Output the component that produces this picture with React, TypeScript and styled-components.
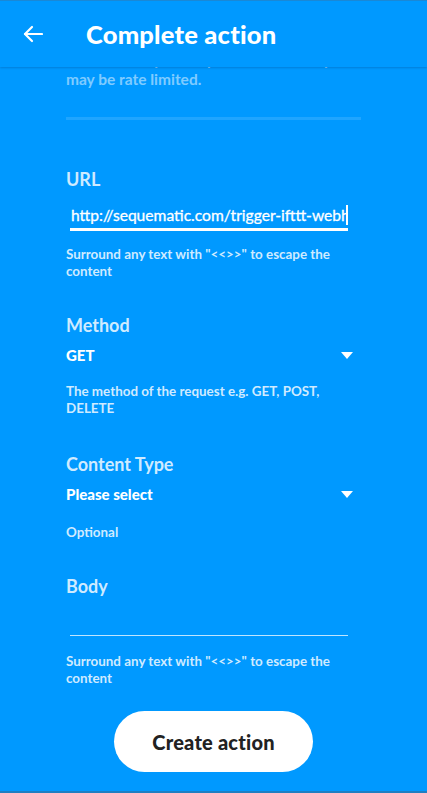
import React from "react";
import styled, { createGlobalStyle } from "styled-components";

const Global = createGlobalStyle`
  html, body { margin: 0; padding: 0; background: #0099ff; }
  body { font-family: "Lato", "Open Sans", sans-serif; -webkit-font-smoothing: antialiased; }
  * { box-sizing: border-box; }
`;

const Screen = styled.div`
  position: relative;
  width: 427px;
  height: 793px;
  overflow: hidden;
  background: #0099ff;
  border-top: 1px solid #1a88d6;
  border-bottom: 2px solid #1f7fc2;
`;

const Header = styled.header`
  position: absolute;
  top: 0;
  left: 0;
  right: 0;
  height: 66px;
  z-index: 2;
  display: flex;
  align-items: center;
  background: #0099ff;
  box-shadow: 0 1px 2px rgba(0, 40, 90, 0.25);
`;

const BackButton = styled.button`
  width: 20px;
  height: 20px;
  margin-left: 23px;
  padding: 0;
  border: none;
  background: none;
  display: flex;
  align-items: center;
  justify-content: center;
`;

const Title = styled.h1`
  margin: 0 0 0 43px;
  color: #fff;
  font-size: 25.5px;
  font-weight: 900;
  letter-spacing: 0.2px;
`;

const Content = styled.main`
  padding: 0 66px;
  margin-top: 48px;
  display: flex;
  flex-direction: column;
`;

const Help = styled.p`
  margin: 0;
  font-size: 13.4px;
  line-height: 17px;
  font-weight: 700;
  color: rgba(255, 255, 255, 0.82);
`;

const Intro = styled.p`
  margin: 0;
  font-size: 15.5px;
  line-height: 20px;
  font-weight: 700;
  color: rgba(255, 255, 255, 0.5);
`;

const Divider = styled.div`
  height: 3px;
  margin-top: 28px;
  background: rgba(255, 255, 255, 0.12);
`;

const Field = styled.section<{ $top: number }>`
  margin-top: ${(p) => p.$top}px;
  display: flex;
  flex-direction: column;
`;

const Label = styled.div`
  font-size: 18px;
  line-height: 24px;
  font-weight: 700;
  color: rgba(255, 255, 255, 0.82);
`;

const InputLine = styled.div<{ $thin?: boolean; $h: number }>`
  margin: 10px 13px 0 4px;
  height: ${(p) => p.$h}px;
  padding: 0 0 0 1px;
  border-bottom: ${(p) => (p.$thin ? "1.5px solid rgba(255,255,255,0.75)" : "3px solid #fff")};
  display: flex;
  align-items: center;
  color: #fff;
  font-size: 15.6px;
  font-weight: 400;
`;

const InputText = styled.span`
  flex: 1;
  min-width: 0;
  overflow: hidden;
  white-space: nowrap;
  -webkit-text-stroke: 0.3px #fff;
`;

const Caret = styled.span`
  display: inline-block;
  width: 2px;
  height: 20px;
  background: #fff;
  flex-shrink: 0;
`;

const Select = styled.div`
  margin-top: 8px;
  display: flex;
  align-items: center;
  justify-content: space-between;
  color: #fff;
  font-size: 15px;
  line-height: 20px;
  font-weight: 900;
  padding-right: 8px;
`;

const Arrow = styled.span`
  width: 0;
  height: 0;
  border-left: 6px solid transparent;
  border-right: 6px solid transparent;
  border-top: 7px solid #fff;
`;

const HelpGap = styled.div<{ $top: number }>`
  margin-top: ${(p) => p.$top}px;
`;

const Footer = styled.div`
  margin-top: 24px;
  display: flex;
  justify-content: center;
`;

const Primary = styled.button`
  width: 199px;
  height: 61px;
  border: none;
  border-radius: 31px;
  background: #fff;
  color: #222;
  font-family: "Lato", "Open Sans", sans-serif;
  font-size: 20px;
  font-weight: 900;
  letter-spacing: 0.2px;
`;

export default function App() {
  return (
    <>
      <Global />
      <Screen>
        <Header>
          <BackButton aria-label="Back">
            <svg width="20" height="18" viewBox="0 0 20 18" fill="none" stroke="#fff" strokeWidth="2.2" strokeLinecap="round" strokeLinejoin="round">
              <path d="M19 9H2" />
              <path d="M9 2L2 9l7 7" />
            </svg>
          </BackButton>
          <Title>Complete action</Title>
        </Header>
        <Content>
          <Intro>
            Please note: your requests to this endpoint
            <br />
            may be rate limited.
          </Intro>
          <Divider />

          <Field $top={47}>
            <Label>URL</Label>
            <InputLine $h={30}>
              <InputText>http://sequematic.com/trigger-ifttt-webhook</InputText>
              <Caret />
            </InputLine>
            <HelpGap $top={15}>
              <Help>
                Surround any text with "&lt;&lt;&gt;&gt;" to escape the content
              </Help>
            </HelpGap>
          </Field>

          <Field $top={33}>
            <Label>Method</Label>
            <Select>
              GET
              <Arrow />
            </Select>
            <HelpGap $top={18}>
              <Help>The method of the request e.g. GET, POST, DELETE</Help>
            </HelpGap>
          </Field>

          <Field $top={35}>
            <Label>Content Type</Label>
            <Select>
              Please select
              <Arrow />
            </Select>
            <HelpGap $top={20}>
              <Help>Optional</Help>
            </HelpGap>
          </Field>

          <Field $top={33}>
            <Label>Body</Label>
            <InputLine $thin $h={28} />
            <HelpGap $top={17}>
              <Help>
                Surround any text with "&lt;&lt;&gt;&gt;" to escape the content
              </Help>
            </HelpGap>
          </Field>
        </Content>
        <Footer>
          <Primary>Create action</Primary>
        </Footer>
      </Screen>
    </>
  );
}
